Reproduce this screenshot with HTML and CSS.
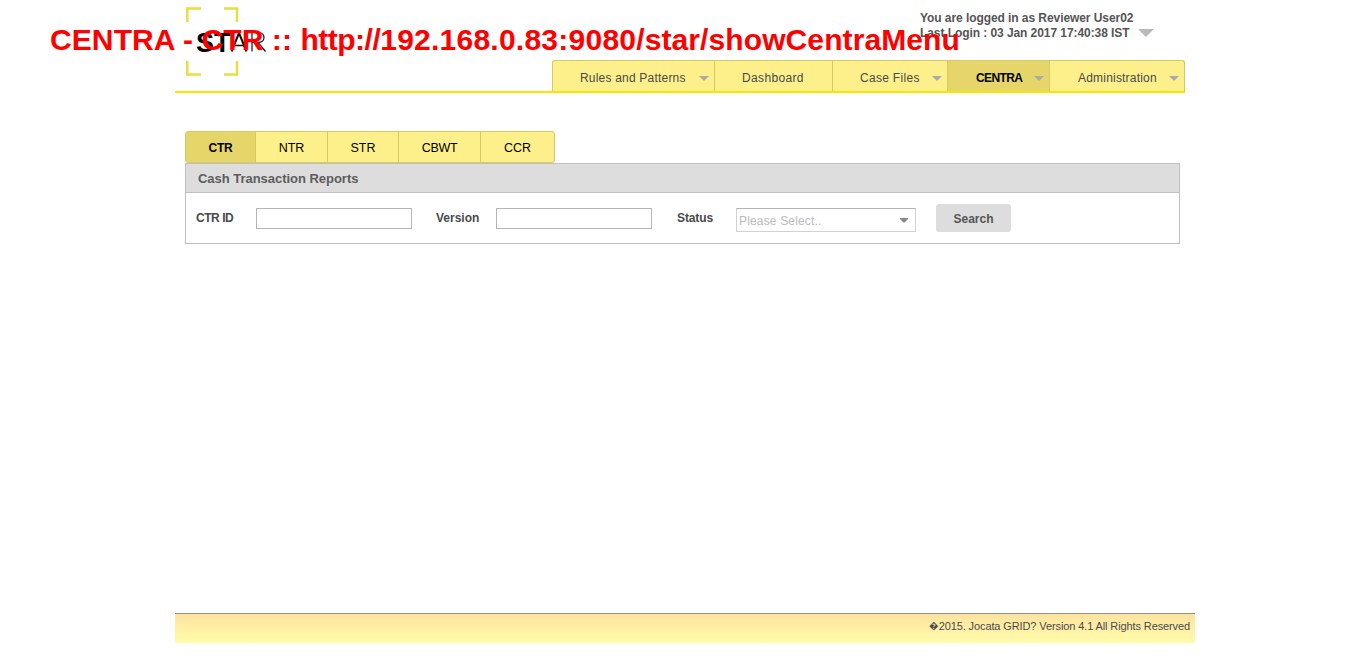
FILE: index.html
```html
<!DOCTYPE html>
<html lang="en">
<head>
<meta charset="utf-8">
<title>CENTRA - CTR</title>
<link rel="stylesheet" href="styles.css">
</head>
<body>
<div class="caption">CENTRA - CTR :: <span class="scheme">http://</span><span class="host">192.168.0.83:9080</span>/star/showCentraMenu</div>
<div class="page">
  <header class="header">
    <svg class="logo" width="84" height="72" viewBox="0 0 84 72">
      <g fill="none" stroke="#e9dc45" stroke-width="2.500">
        <path d="M2.300 17V3.500H16M39 3.500h13V17M2.300 56v13.500H16M39 69.500h13V56"/>
      </g>
      <text x="11" y="46.500" class="logo-s">S</text>
      <text x="29" y="46.500" class="logo-t">T</text>
      <g fill="none" stroke="#111"><path stroke-width="2" d="M46.500 46.500L54 28L61.500 46.500"/><path stroke-width="1.500" d="M49 40.500h10"/><path stroke-width="1.200" d="M67 46.500V27.500h6c8 0 8 10 0 10h-6M73 37.500l7.500 9"/></g>
    </svg>
    <div class="right">
      <div class="user">
        <div class="user-text">
          <div>You are logged in as Reviewer User02</div>
          <div>Last Login : 03 Jan 2017 17:40:38 IST</div>
        </div>
        <i class="arrow arrow-user"></i>
      </div>
      <nav class="nav">
        <a class="rules"><span>Rules and Patterns</span><i class="arrow"></i></a>
        <a class="dash"><span>Dashboard</span></a>
        <a class="cases"><span>Case Files</span><i class="arrow"></i></a>
        <a class="centra active"><span>CENTRA</span><i class="arrow"></i></a>
        <a class="admin"><span>Administration</span><i class="arrow"></i></a>
      </nav>
    </div>
  </header>
  <main class="main">
    <div class="tabs">
      <a class="tab-ctr active">CTR</a>
      <a class="tab-ntr">NTR</a>
      <a class="tab-str">STR</a>
      <a class="tab-cbwt">CBWT</a>
      <a class="tab-ccr">CCR</a>
    </div>
    <section class="panel">
      <h2>Cash Transaction Reports</h2>
      <form class="filters">
        <label class="l-id" for="ctr">CTR ID</label><input id="ctr" type="text">
        <label class="l-version" for="version">Version</label><input id="version" type="text">
        <label class="l-status">Status</label>
        <div class="select"><span>Please Select..</span><svg width="8" height="5" viewBox="0 0 8 5"><path fill="#888" d="M0 0h8v1L4.500 4.500h-1L0 1z"/></svg></div>
        <button type="button">Search</button>
      </form>
    </section>
  </main>
  <footer class="footer"><span class="mark">&#xFFFD;</span><span>2015. Jocata GRID? Version 4.1 All Rights Reserved</span></footer>
</div>
</body>
</html>
```
FILE: styles.css
```css
* { box-sizing: border-box; }
body {
  margin: 0;
  background: #fff;
  color: #4a4a4a;
  font: 12px/14px "Liberation Sans", Arial, sans-serif;
  overflow: hidden;
}
.caption {
  position: absolute;
  left: 50px;
  top: 23px;
  z-index: 2;
  color: #f00;
  font-size: 30px;
  font-weight: bold;
  line-height: 34px;
  letter-spacing: .1px;
  white-space: pre;
}
.scheme { letter-spacing: -.5px; }
.host { letter-spacing: .24px; }
.page {
  width: 1020px;
  height: 658px;
  margin-left: 175px;
  display: flex;
  flex-direction: column;
}
.header {
  width: 1010px;
  height: 93px;
  flex: none;
  display: flex;
  justify-content: space-between;
  border-bottom: 2px solid #f3e900;
}
.logo { margin: 5px 0 0 10px; }
.logo-s { font-size: 27px; font-weight: bold; fill: #000; }
.logo-t { font-size: 27px; font-weight: bold; fill: #000; }
.right { width: 633px; display: flex; flex-direction: column; justify-content: space-between; }
.user {
  display: flex;
  align-items: flex-end;
  gap: 5px;
  padding: 11px 0 0 368px;
  font-weight: bold;
  line-height: 15px;
  letter-spacing: -.07px;
  color: #555;
  white-space: nowrap;
}
.user-text { width: 213px; }
.arrow {
  width: 0;
  height: 0;
  border: 5px solid transparent;
  border-top-color: #aaa;
  border-bottom: 0;
}
.arrow-user { border-width: 8px 8px 0; border-top-color: #bbb; margin-bottom: 4px; }
.nav {
  height: 31px;
  display: flex;
  border: 1px solid #d6ca60;
  border-bottom: 0;
  border-radius: 3px 3px 0 0;
  background: #fdf08b;
  overflow: hidden;
}
.nav a {
  display: flex;
  flex: none;
  align-items: center;
  justify-content: space-between;
  padding: 4px 5px 0 27px;
  border-right: 1px solid #d6ca60;
  letter-spacing: .2px;
  white-space: nowrap;
}
.nav .rules { width: 162px; }
.nav .dash { width: 118px; letter-spacing: .35px; }
.nav .cases { width: 114px; padding-right: 5px; border-right: 0; letter-spacing: .3px; }
.nav .centra { width: 103px; padding-left: 28px; border-left: 1px solid #d6ca60; letter-spacing: -.6px; }
.nav .admin { width: 134px; border: 0; padding-left: 28px; }
.nav .active, .tabs .active { background: #e6d66a; color: #000; font-weight: bold; }
.main { padding: 38px 15px 0 10px; flex: 1; }
.tabs {
  width: 370px;
  height: 32px;
  display: flex;
  border: 1px solid #d6ca60;
  border-radius: 3px;
  background: #fdf08b;
  overflow: hidden;
  color: #000;
  font-size: 12.5px;
}
.tabs a {
  display: flex;
  align-items: center;
  justify-content: center;
  padding-top: 2px;
  border-right: 1px solid #d6ca60;
}
.tabs .tab-ctr { width: 70px; font-size: 12px; letter-spacing: -.2px; }
.tab-ntr { width: 72px; }
.tab-str { width: 71px; }
.tabs .tab-cbwt { width: 82px; letter-spacing: -.3px; }
.tabs .tab-ccr { width: 73px; border: 0; }
.panel { width: 995px; height: 81px; border: 1px solid #c0c0c0; }
.panel h2 {
  height: 29px;
  margin: 0;
  padding-left: 12px;
  border-bottom: 1px solid #c0c0c0;
  background: #ddd;
  font-size: 13px;
  line-height: 29px;
  letter-spacing: -.03px;
  color: #5c5c5c;
}
.filters { display: flex; padding: 11px 0 0 10px; font-weight: bold; }
.filters label { padding-top: 7px; }
.filters .l-id { width: 60px; letter-spacing: -.45px; }
.filters .l-version { width: 60px; margin-left: 24px; }
.filters .l-status { width: 59px; margin-left: 25px; letter-spacing: -.1px; }
.filters input { width: 156px; height: 21px; margin: 4px 0 0; padding: 0 3px; border: 1px solid #b5b5b5; background: #fff; }
.select {
  width: 180px;
  height: 24px;
  margin: 4px 20px 0 0;
  padding: 2px 7px 0 2px;
  display: flex;
  align-items: center;
  justify-content: space-between;
  border: 1px solid #d2d2d2;
  border-top-color: #b5b5b5;
  font-weight: normal;
  letter-spacing: .16px;
  color: #bbb;
}
.select svg { margin-top: -1px; }
.filters button {
  width: 75px;
  height: 28px;
  padding: 1px 0 0;
  border: 0;
  border-radius: 3px;
  background: #ddd;
  color: #555;
  font: bold 12px "Liberation Sans", Arial, sans-serif;
}
.footer {
  height: 30px;
  margin-bottom: 15px;
  padding: 5px 5px 0 0;
  display: flex;
  justify-content: flex-end;
  border-top: 1px solid #94947c;
  background: linear-gradient(#ffe3a0, #fffcaa);
  font-size: 11px;
  letter-spacing: -.11px;
}
.mark { font-size: 9.5px; }
```
